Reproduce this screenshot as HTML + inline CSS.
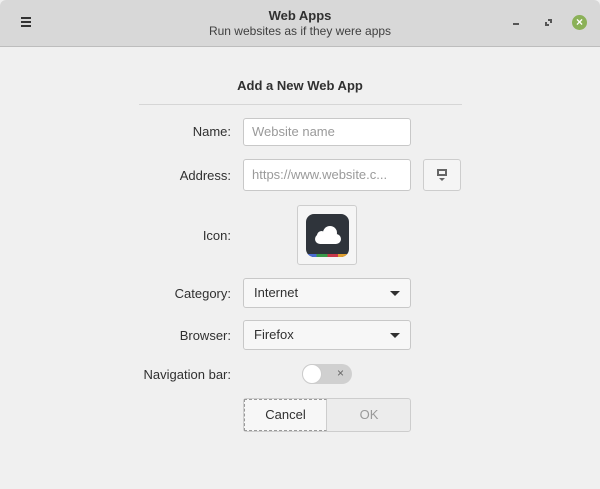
<!DOCTYPE html>
<html><head><style>
*{box-sizing:border-box;margin:0;padding:0}
body{width:600px;height:489px;background:#f0f0f0;font-family:"Liberation Sans","DejaVu Sans",sans-serif;font-size:13px;color:#303030;position:relative;overflow:hidden}
.hb{position:absolute;left:0;top:0;width:600px;height:47px;background:#d8d8d8;border-bottom:1px solid #bdbdbd;border-radius:6px 6px 0 0}
.abs{position:absolute}
.lbl{position:absolute;right:369px;font-size:13px;color:#303030;text-align:right;white-space:nowrap}
.inp{position:absolute;background:#fff;border:1px solid #c8c8c8;border-radius:3px;padding-left:8px;color:#9a9a9a;font-size:13px}
.btn{position:absolute;background:#f5f5f5;border:1px solid #cdcdcd;border-radius:3px}
.combo{position:absolute;background:#f7f7f7;border:1px solid #c8c8c8;border-radius:3px;padding-left:10px;font-size:13px;color:#303030}
.arrow{position:absolute;right:10px;top:12px;width:0;height:0;border-left:5px solid transparent;border-right:5px solid transparent;border-top:5px solid #303030}
</style></head><body>
<div class="hb">
  <div class="abs" style="left:21px;top:17px;width:10px;height:2px;background:#333;box-shadow:0 4px 0 #333,0 8px 0 #333"></div>
  <div class="abs" style="left:0;width:600px;top:8px;text-align:center;font-weight:bold;font-size:13px;color:#303030">Web Apps</div>
  <div class="abs" style="left:0;width:600px;top:24px;text-align:center;font-size:12px;color:#404040">Run websites as if they were apps</div>
  <div class="abs" style="left:513px;top:23px;width:6px;height:2px;background:#555"></div>
  <div class="abs" style="left:548px;top:19px;width:4px;height:4px;border-top:2px solid #555;border-right:2px solid #555"></div>
  <div class="abs" style="left:545px;top:22px;width:4px;height:4px;border-bottom:2px solid #555;border-left:2px solid #555"></div>
  <div class="abs" style="left:572px;top:15px;width:15px;height:15px;border-radius:50%;background:#8bb158;color:#fff;font-size:12px;font-weight:bold;text-align:center;line-height:15px">×</div>
</div>
<div class="abs" style="left:0;width:600px;top:78px;text-align:center;font-weight:bold;font-size:13px">Add a New Web App</div>
<div class="abs" style="left:139px;top:104px;width:323px;height:1px;background:#d6d6d6"></div>

<div class="lbl" style="top:124px">Name:</div>
<div class="inp" style="left:243px;top:118px;width:168px;height:28px;line-height:26px">Website name</div>

<div class="lbl" style="top:168px">Address:</div>
<div class="inp" style="left:243px;top:159px;width:168px;height:32px;line-height:30px;white-space:nowrap;overflow:hidden">https://www.website.c...</div>
<div class="btn" style="left:423px;top:159px;width:38px;height:32px">
  <div class="abs" style="left:13px;top:9px;width:10px;height:7px;border:2px solid #666"></div>
  <div class="abs" style="left:15px;top:18px;width:0;height:0;border-left:3px solid transparent;border-right:3px solid transparent;border-top:3px solid #666"></div>
</div>

<div class="lbl" style="top:228px">Icon:</div>
<div class="btn" style="left:297px;top:205px;width:60px;height:60px">
  <div class="abs" style="left:8px;top:8px;width:43px;height:43px;border-radius:8px;background:#2f343b;overflow:hidden">
    <div class="abs" style="left:0;bottom:0;width:43px;height:3px;background:linear-gradient(90deg,#4a6bd1 0 25%,#3a9a4a 25% 50%,#c8384a 50% 75%,#e0a030 75%)"></div>
    <div class="abs" style="left:9px;top:20px;width:26px;height:10px;background:#fff;border-radius:5px"></div>
    <div class="abs" style="left:17px;top:12px;width:14px;height:14px;background:#fff;border-radius:50%"></div>
    <div class="abs" style="left:11px;top:17px;width:9px;height:9px;background:#fff;border-radius:50%"></div>
  </div>
</div>

<div class="lbl" style="top:286px">Category:</div>
<div class="combo" style="left:243px;top:278px;width:168px;height:30px;line-height:28px">Internet<div class="arrow"></div></div>

<div class="lbl" style="top:328px">Browser:</div>
<div class="combo" style="left:243px;top:320px;width:168px;height:30px;line-height:28px">Firefox<div class="arrow"></div></div>

<div class="lbl" style="top:367px">Navigation bar:</div>
<div class="abs" style="left:302px;top:364px;width:50px;height:20px;border-radius:10px;background:#d0d0d0">
  <div class="abs" style="left:0;top:0;width:20px;height:20px;border-radius:50%;background:#fff;border:1px solid #ccc"></div>
  <div class="abs" style="left:35px;top:2px;font-size:12px;color:#666">×</div>
</div>

<div class="abs" style="left:243px;top:398px;width:168px;height:34px;border:1px solid #cdcdcd;border-radius:3px;background:#ececec"></div>
<div class="abs" style="left:244px;top:399px;width:83px;height:32px;background:#f7f7f7;border:1px dashed #999;border-right:1px solid #cdcdcd;text-align:center;line-height:30px;color:#303030">Cancel</div>
<div class="abs" style="left:328px;top:399px;width:82px;height:32px;text-align:center;line-height:32px;color:#999">OK</div>
</body></html>
